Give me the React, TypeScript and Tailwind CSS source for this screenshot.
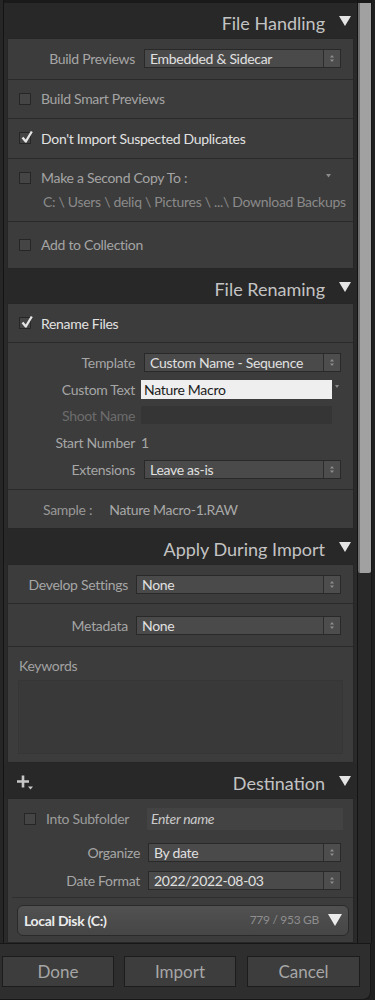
import React from "react";

function Tri({ w = 12, h = 10, color = "#e4e4e4" }: { w?: number; h?: number; color?: string }) {
  return (
    <svg width={w} height={h} viewBox={`0 0 ${w} ${h}`} className="shrink-0">
      <path d={`M0 0H${w}L${w / 2} ${h}Z`} fill={color} />
    </svg>
  );
}

function Header({ title, plus }: { title: string; plus?: boolean }) {
  return (
    <div className="relative h-[35px] pt-[5px] flex items-center justify-end pr-[6px] bg-[#282828] tracking-normal">
      {plus && (
        <svg width="20" height="16" viewBox="0 0 20 16" className="absolute left-[9px] top-[11px]">
          <path d="M4 7.5H16M10 1.5V13.5" stroke="#c8c8c8" strokeWidth="2.6" fill="none" />
          <path d="M15 12.5H20L17.5 15.5Z" fill="#c8c8c8" />
        </svg>
      )}
      <span className="text-[18px] leading-none text-[#c3c3c3] mr-[14px]">{title}</span>
      <div className="-mt-[4px]">
        <Tri />
      </div>
    </div>
  );
}

function Stepper() {
  return (
    <svg width="6" height="9" viewBox="0 0 6 9">
      <path d="M1 3.6L3 1L5 3.6Z" fill="#8e8e8e" />
      <path d="M1 5.4L3 8L5 5.4Z" fill="#8e8e8e" />
    </svg>
  );
}

function Select({ value, className = "" }: { value: string; className?: string }) {
  return (
    <div className={`h-[19px] flex border border-[#292929] bg-[#4a4a4a] ${className}`}>
      <div className="flex-1 pl-[5px] text-[14px] leading-[17px] text-[#e0e0e0] whitespace-nowrap overflow-hidden">
        {value}
      </div>
      <div className="w-[17px] border-l border-[#2c2c2c] bg-[#4d4d4d] flex items-center justify-center">
        <Stepper />
      </div>
    </div>
  );
}

function Check({ checked }: { checked?: boolean }) {
  return (
    <div className="relative w-[12px] h-[12px] shrink-0 bg-[#454545] border border-[#262626]">
      {checked && (
        <svg width="14" height="14" viewBox="0 0 14 14" className="absolute left-[0px] top-[-3px]">
          <path d="M2.5 7.5L5.8 11.5L11.8 1.5" stroke="#e6e6e6" strokeWidth="2.3" fill="none" strokeLinejoin="round" />
        </svg>
      )}
    </div>
  );
}

function Divider() {
  return <div className="h-px bg-[#2a2a2a]" />;
}

function Section({ children }: { children: React.ReactNode }) {
  return <div className="mx-[3px] border border-[#262626] bg-[#3c3c3c]">{children}</div>;
}

function CheckRow({ label, checked, h }: { label: string; checked?: boolean; h: string }) {
  return (
    <div className={`${h} flex items-center pl-[11px]`}>
      <Check checked={checked} />
      <span className={`ml-[10px] text-[14px] ${checked ? "text-[#e2e2e2]" : "text-[#a4a4a4]"}`}>{label}</span>
    </div>
  );
}

export default function App() {
  return (
    <div className="w-[375px] h-[1000px] bg-[#1f1f1f] overflow-hidden font-['Lato',sans-serif] tracking-[-0.3px] flex flex-col">
      <div className="flex h-[943px]">
        {/* panel */}
        <div className="w-[358px] pl-[3px] bg-[#262626]">
          <div className="h-full border-l border-r border-[#141414] bg-[#2a2a2a] flex flex-col">
            <div className="h-[3px] bg-[#1a1a1a]" />
            <Header title="File Handling" />
            <Section>
              <div className="h-[40px] flex items-center">
                <div className="w-[127px] text-right text-[14px] text-[#a6a6a6]">Build Previews</div>
                <Select value="Embedded & Sidecar" className="ml-[9px] w-[197px]" />
              </div>
              <Divider />
              <CheckRow label="Build Smart Previews" h="h-[38px]" />
              <Divider />
              <CheckRow label="Don't Import Suspected Duplicates" checked h="h-[39px]" />
              <Divider />
              <div className="h-[62px] pt-[9px] pl-[11px] relative">
                <div className="flex items-center h-[20px]">
                  <Check />
                  <span className="ml-[10px] text-[14px] text-[#a4a4a4]">Make a Second Copy To :</span>
                </div>
                <svg width="5" height="4" viewBox="0 0 5 4" className="absolute left-[318px] top-[15px]">
                  <path d="M0 0H5L2.5 3.5Z" fill="#8a8a8a" />
                </svg>
                <div className="mt-[4px] pl-[24px] h-[20px] leading-[20px] text-[14px] text-[#8a8a8a] whitespace-nowrap">
                  C: \ Users \ deliq \ Pictures \ ...\ Download Backups
                </div>
              </div>
              <Divider />
              <CheckRow label="Add to Collection" h="h-[46px]" />
            </Section>
            <Header title="File Renaming" />
            <Section>
              <CheckRow label="Rename Files" checked h="h-[38px]" />
              <Divider />
              <div className="h-[146px] pt-[10px] flex flex-col">
                <div className="flex items-center h-[19px]">
                  <div className="w-[127px] text-right text-[14px] text-[#a6a6a6]">Template</div>
                  <Select value="Custom Name - Sequence" className="ml-[9px] w-[197px]" />
                </div>
                <div className="flex items-center h-[19px] mt-[8px] relative">
                  <div className="w-[127px] text-right text-[14px] text-[#a6a6a6]">Custom Text</div>
                  <div className="ml-[6px] w-[191px] h-[19px] bg-[#efefef] pl-[3px] text-[14px] leading-[19px] text-[#1c1c1c]">
                    Nature Macro
                  </div>
                  <svg width="4" height="3" viewBox="0 0 4 3" className="ml-[3px] mb-[6px]">
                    <path d="M0 0H4L2 3Z" fill="#8a8a8a" />
                  </svg>
                </div>
                <div className="flex items-center h-[18px] mt-[7px]">
                  <div className="w-[127px] text-right text-[14px] text-[#6c6c6c]">Shoot Name</div>
                  <div className="ml-[6px] w-[191px] h-[18px] bg-[#353535]" />
                </div>
                <div className="flex items-center h-[19px] mt-[9px]">
                  <div className="w-[127px] text-right text-[14px] text-[#a6a6a6]">Start Number</div>
                  <span className="ml-[6px] text-[14px] text-[#a6a6a6]">1</span>
                </div>
                <div className="flex items-center h-[19px] mt-[8px]">
                  <div className="w-[127px] text-right text-[14px] text-[#a6a6a6]">Extensions</div>
                  <Select value="Leave as-is" className="ml-[9px] w-[197px]" />
                </div>
              </div>
              <Divider />
              <div className="h-[38px] flex items-center pl-[35px] text-[14px]">
                <span className="text-[#989898]">Sample :</span>
                <span className="ml-[17px] text-[#a8a8a8]">Nature Macro-1.RAW</span>
              </div>
            </Section>
            <Header title="Apply During Import" />
            <Section>
              <div className="h-[38px] flex items-center">
                <div className="w-[120px] text-right text-[14px] text-[#a6a6a6]">Develop Settings</div>
                <Select value="None" className="ml-[8px] w-[205px]" />
              </div>
              <Divider />
              <div className="h-[42px] flex items-center">
                <div className="w-[120px] text-right text-[14px] text-[#a6a6a6]">Metadata</div>
                <Select value="None" className="ml-[8px] w-[205px]" />
              </div>
              <Divider />
              <div className="h-[115px] pt-[10px] px-[10px]">
                <div className="h-[18px] leading-[18px] pl-[1px] text-[14px] text-[#a2a2a2]">Keywords</div>
                <div className="mt-[5px] h-[74px] bg-[#393939] border border-[#363636]" />
              </div>
            </Section>
            <Header title="Destination" plus />
            <Section>
              <div className="h-[98px] pt-[9px] flex flex-col">
                <div className="flex items-center h-[22px]">
                  <div className="ml-[16px]">
                    <Check />
                  </div>
                  <span className="ml-[10px] text-[14px] text-[#9c9c9c]">Into Subfolder</span>
                  <div className="ml-auto mr-[10px] w-[196px] h-[22px] bg-[#434343] pl-[4px] text-[14px] leading-[22px] italic text-[#cacaca]">
                    Enter name
                  </div>
                </div>
                <div className="flex items-center h-[19px] mt-[13px]">
                  <div className="w-[132px] text-right text-[14px] text-[#a6a6a6]">Organize</div>
                  <Select value="By date" className="ml-[8px] w-[193px]" />
                </div>
                <div className="flex items-center h-[19px] mt-[9px]">
                  <div className="w-[132px] text-right text-[14px] text-[#a6a6a6]">Date Format</div>
                  <Select value="2022/2022-08-03" className="ml-[8px] w-[193px]" />
                </div>
              </div>
              <div className="h-px bg-[#2f2f2f] ml-[4px]" />
              <div className="h-[44px] pt-[7px] pl-[9px] pr-[4px]">
                <div className="h-[31px] rounded-[6px] border border-[#2a2a2a] bg-gradient-to-b from-[#515151] to-[#464646] flex items-center pl-[6px] pr-[6px]">
                  <span className="text-[14px] font-bold text-[#ececec]">Local Disk (C:)</span>
                  <span className="ml-auto mr-[9px] text-[12px] text-[#8e8e8e]">779 / 953 GB</span>
                  <Tri w={14} h={12} color="#ececec" />
                </div>
              </div>
            </Section>
          </div>
        </div>
        {/* scrollbar */}
        <div className="w-[14px] bg-[#282828] border-r border-[#161616] flex flex-col">
          <div className="h-[3px] bg-[#1a1a1a]" />
          <div className="h-[570px] bg-[#a1a1a1] border-l-[2px] border-[#6e6e6e] rounded-b-[2px]" />
        </div>
        <div className="flex-1 bg-[#1f1f1f]" />
      </div>
      {/* bottom bar */}
      <div className="w-[371px] h-[57px] bg-[#2e2e2e] border-t border-[#171717] border-r border-b rounded-br-[8px] pt-[12px] pl-[2px] flex gap-[10px] tracking-normal">
        <button className="w-[112px] h-[31px] bg-[#3d3d3d] border border-[#1c1c1c] text-[17px] text-[#a6a6a6]">Done</button>
        <button className="w-[112px] h-[31px] bg-[#3d3d3d] border border-[#1c1c1c] text-[17px] text-[#a6a6a6]">Import</button>
        <button className="w-[113px] h-[31px] bg-[#3d3d3d] border border-[#1c1c1c] text-[17px] text-[#a6a6a6] ml-[1px]">Cancel</button>
      </div>
    </div>
  );
}
